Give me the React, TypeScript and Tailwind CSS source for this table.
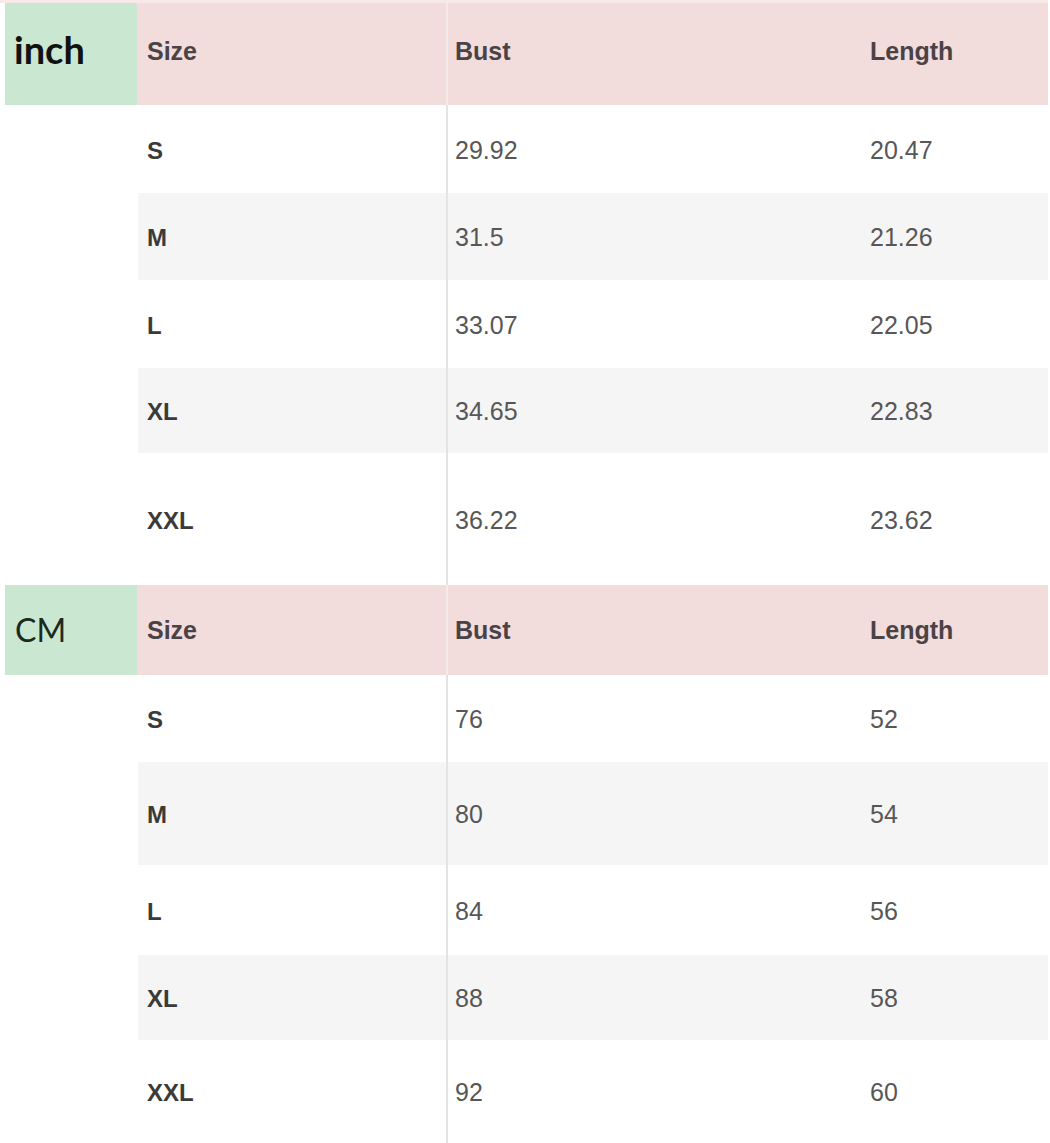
const inchRows = [
  { size: 'S', bust: '29.92', length: '20.47', h: 'h-[88px]' },
  { size: 'M', bust: '31.5', length: '21.26', h: 'h-[87px]' },
  { size: 'L', bust: '33.07', length: '22.05', h: 'h-[88px]' },
  { size: 'XL', bust: '34.65', length: '22.83', h: 'h-[85px]' },
  { size: 'XXL', bust: '36.22', length: '23.62', h: 'h-[132px]' },
];

const cmRows = [
  { size: 'S', bust: '76', length: '52', h: 'h-[87px]' },
  { size: 'M', bust: '80', length: '54', h: 'h-[103px]' },
  { size: 'L', bust: '84', length: '56', h: 'h-[90px]' },
  { size: 'XL', bust: '88', length: '58', h: 'h-[85px]' },
  { size: 'XXL', bust: '92', length: '60', h: 'h-[103px]' },
];

type Row = { size: string; bust: string; length: string; h: string };

function SizeTable({ unit, headerH, headPad, rows }: { unit: 'inch' | 'cm'; headerH: string; headPad: string; rows: Row[] }) {
  return (
    <div className="flex flex-col">
      {/* Header */}
      <div className={`flex ${headerH}`}>
        <div className="w-[5px] shrink-0 bg-white" />
        <div className="w-[132px] shrink-0 bg-[#c9e7d1] flex items-center pl-[9px]">
          {unit === 'inch' ? (
            <span className="font-['Lato',sans-serif] font-bold text-[38px] leading-none text-[#111] -mt-[10px]">inch</span>
          ) : (
            <span className="font-['Lato',sans-serif] text-[32px] leading-none text-[#1c2a1e] pl-[1px]">CM</span>
          )}
        </div>
        <div className={`w-[309px] shrink-0 bg-[#f2dcdc] flex items-center pl-[10px] ${headPad} text-[25px] font-bold text-[#4a4346]`}>
          Size
        </div>
        <div className="w-[2px] shrink-0 bg-[#f6e9e9]" />
        <div className={`w-[414px] shrink-0 bg-[#f2dcdc] flex items-center pl-[7px] ${headPad} text-[25px] font-bold text-[#4a4346]`}>
          Bust
        </div>
        <div className={`flex-1 bg-[#f2dcdc] flex items-center pl-[8px] ${headPad} text-[25px] font-bold text-[#4a4346]`}>
          Length
        </div>
      </div>

      {rows.map((r, i) => {
        const bg = i % 2 === 1 ? 'bg-[#f5f5f5]' : 'bg-white';
        return (
          <div key={r.size} className={`flex ${r.h}`}>
            <div className="w-[138px] shrink-0 bg-white" />
            <div className={`w-[308px] shrink-0 ${bg} flex items-center pl-[9px] pt-[3px] text-[24px] font-bold text-[#3a3a3a]`}>
              {r.size}
            </div>
            <div className="w-[2px] shrink-0 bg-[#e4e4e4]" />
            <div className={`w-[414px] shrink-0 ${bg} flex items-center pl-[7px] pt-[3px] text-[25px] text-[#575757]`}>
              {r.bust}
            </div>
            <div className={`flex-1 ${bg} flex items-center pl-[8px] pt-[3px] text-[25px] text-[#575757]`}>
              {r.length}
            </div>
          </div>
        );
      })}
    </div>
  );
}

export default function App() {
  return (
    <div className="w-[1050px] h-[1143px] bg-white overflow-hidden font-['Liberation_Sans',Arial,sans-serif]">
      <div className="w-[1048px]">
        <div className="h-[3px] bg-[#f8e9e9]" />
        <SizeTable unit="inch" headerH="h-[102px]" headPad="pb-[4px]" rows={inchRows} />
        <SizeTable unit="cm" headerH="h-[90px]" headPad="pt-[2px]" rows={cmRows} />
      </div>
    </div>
  );
}
